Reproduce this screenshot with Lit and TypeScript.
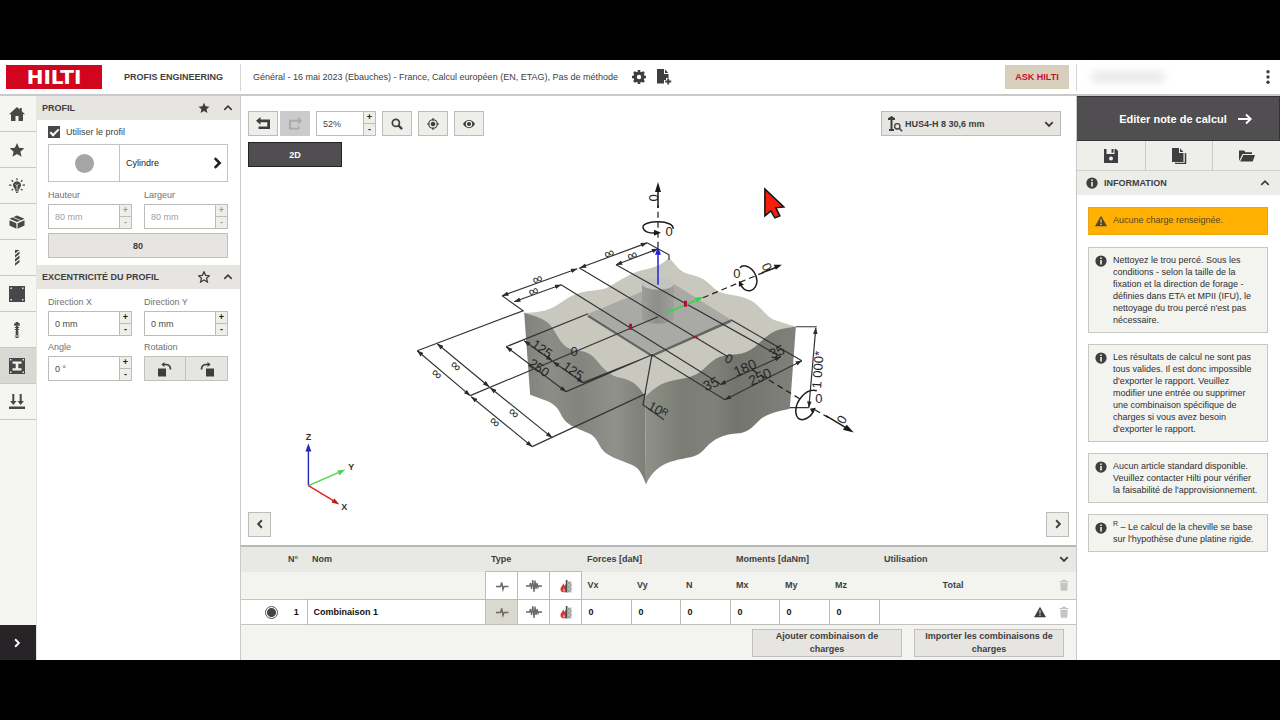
import { LitElement, html, svg, css } from "lit";
import { customElement, property } from "lit/decorators.js";
import { classMap } from "lit/directives/class-map.js";

const star = "M8 1l2.1 4.8 5.2.5-3.9 3.4 1.2 5.1L8 12.100l-4.600 2.700 1.200-5.100L.7 6.300l5.200-.5z";

const icons: Record<string, unknown> = {
  home: svg`<path d="M8 1L0 8.300h2V15h4.500v-5h3v5H14V8.300h2L12.800 5.200V2h-2v1.500z"/>`,
  star: svg`<path d=${star}/>`,
  starOutline: svg`<path d=${star} fill="none" stroke="currentColor" stroke-width="1.700"/>`,
  bulb: svg`<path d="M8 3.200a4 4 0 0 0-2.600 7.100l.6 1.400h4l.6-1.400A4 4 0 0 0 8 3.200zM6.200 12.200h3.600v1H6.200zM6.600 13.700h2.800L8.700 15H7.300z"/><path d="M8 .2v2M2.600 2.200l1.500 1.500M13.400 2.200l-1.500 1.500M0 7.200h2.500M13.500 7.200H16M2.600 12.200l1.500-1.300M13.400 12.200l-1.500-1.300" fill="none" stroke="currentColor" stroke-width="1.300"/><path d="M8 11V7.500M6.500 6.200L8 7.800l1.500-1.600" fill="none" stroke="#f5f5f1" stroke-width=".8"/>`,
  block: svg`<path d="M8 1.500l7.500 3.200L8 8 .5 4.700zM.5 6.200L7.400 9.300v5.500L.5 11.500zM15.500 6.200L8.600 9.300v5.500l6.900-3.300z"/><path d="M4 3.300l7.500 3.200" stroke="#f5f5f1" stroke-width=".8"/>`,
  drill: svg`<path d="M6 0h4.500L6 3.500zM6 5l4.500-3.500v2.600L6 7.600zM6 9.100l4.500-3.500v2.600L6 11.700zM6 13.200l4.500-3.500v2.600L6 15.800z"/>`,
  plate: svg`<path d="M0 0h16v16H0z"/><path d="M1.500 1.500h1.400v1.400H1.500zM13.100 1.500h1.400v1.400h-1.400zM1.500 13.100h1.400v1.400H1.500zM13.100 13.100h1.400v1.400h-1.400z" fill="#f5f5f1"/>`,
  anchor: svg`<path d="M6.700 0h2.600v1.300h1.500v2.500H5.200V1.300h1.500zM7 4h2v9H7z"/><path d="M5.800 5.500h4.400M5.800 7.500h4.400M6.300 10h3.400M6.300 12h3.400M5.800 14h4.400M6.500 15.500h3" stroke="currentColor" stroke-width="1"/>`,
  profile: svg`<path d="M0 0h16v16H0z"/><path d="M3.500 3.500h9v2.300H9.300v4.400h3.200v2.300h-9v-2.300h3.200V5.800H3.500zM1 1h1.400v1.400H1zM13.600 1H15v1.400h-1.400zM1 13.600h1.400V15H1zM13.600 13.600H15V15h-1.400z" fill="#f0f0ec"/>`,
  loads: svg`<path d="M0 12.500h16V15H0zM3.300 0h2v7h2.200l-3.200 4-3.200-4h2.200zM10.700 0h2v7h2.200l-3.200 4-3.200-4h2.200z"/>`,
  up: svg`<path d="M3 10.500l5-5 5 5" fill="none" stroke="currentColor" stroke-width="2.200"/>`,
  down: svg`<path d="M3 5.500l5 5 5-5" fill="none" stroke="currentColor" stroke-width="2.500"/>`,
  right: svg`<path d="M5.500 3l5 5-5 5" fill="none" stroke="currentColor" stroke-width="2.500"/>`,
  rightBold: svg`<path d="M5 1.500L11.500 8 5 14.500" fill="none" stroke="currentColor" stroke-width="3.500"/>`,
  left: svg`<path d="M10.500 3l-5 5 5 5" fill="none" stroke="currentColor" stroke-width="2.500"/>`,
  gear: svg`<circle cx="8" cy="8" r="3.900" fill="none" stroke="currentColor" stroke-width="3.400"/><path d="M8 1v3M8 12v3M1 8h3M12 8h3M3 3l2.200 2.200M10.800 10.800L13 13M3 13l2.200-2.200M10.800 5.200L13 3" stroke="currentColor" stroke-width="2.600"/>`,
  addDoc: svg`<path d="M1 0h7v5h4.500v4H10v2H8v3.500H1zM9 .3L12.300 4H9z"/><path d="M12.200 9.500v6M9.200 12.500h6" stroke="currentColor" stroke-width="1.800"/>`,
  undo: svg`<path d="M5.500 1v2.500H15V13H3.500v-2.500h8.800V6.200H5.500v2.500L1 4.800z"/>`,
  redo: svg`<path d="M11 .8v3H2v9.700h10.500v-3h-1.800v1.200H4v-6h7v3.100l4-4z"/>`,
  search: svg`<circle cx="6.500" cy="6.500" r="4.700" fill="none" stroke="currentColor" stroke-width="2.300"/><path d="M9.800 9.800l5 5" stroke="currentColor" stroke-width="3"/>`,
  target: svg`<circle cx="8" cy="8" r="5.700" fill="none" stroke="currentColor" stroke-width="1.500"/><circle cx="8" cy="8" r="3"/><path d="M8 0v3.500M8 12.500V16M0 8h3.500M12.500 8H16" stroke="currentColor" stroke-width="1.600"/>`,
  eye: svg`<path d="M0 8c2-3.700 5-5.500 8-5.500s6 1.800 8 5.500c-2 3.700-5 5.500-8 5.500S2 11.700 0 8z"/><circle cx="8" cy="8" r="3.500" fill="none" stroke="#eeeeea" stroke-width="1.500"/>`,
  anchorSearch: svg`<path d="M4.500 0L8 2.300V4H5.500v9H7v2H2v-2h1.500V4H1V2.300z"/><circle cx="10.300" cy="10.300" r="2.700" fill="none" stroke="currentColor" stroke-width="1.300"/><path d="M12.200 12.200l3 3" stroke="currentColor" stroke-width="1.600"/>`,
  save: svg`<path d="M1 1h2.500v5h8V1H13l2 2v12H1zM8.500 1h2v3.800h-2z"/><circle cx="8" cy="10.500" r="2" fill="#eeeeea"/>`,
  copy: svg`<path d="M1 0h7v5h4.500v9H1zM9 .3L12.400 4H9z"/><path d="M14.500 5v10.500H4" fill="none" stroke="currentColor" stroke-width="1.500"/>`,
  folder: svg`<path d="M0 13V2.500h5l1.500 1.700h6.500V6H3.500zM4.300 7H16l-2.300 6.500H1.200z"/>`,
  info: svg`<circle cx="8" cy="8" r="7.500"/><path d="M6.800 6.700h2.400v6H6.800zM6.800 3.200h2.400v2.200H6.800z" fill="#deded9"/>`,
  warn: svg`<path d="M8 1l8 14H0z"/><path d="M7.200 5.500h1.600l-.3 5h-1zM7.200 11.500h1.600v1.700H7.200z" fill="#e8e5da"/>`,
  trash: svg`<path d="M5.500 1h5v1.500H14V4H2V2.500h3.500zM3 5h10l-.7 10.500H3.700z"/>`,
  dots: svg`<circle cx="8" cy="2.800" r="1.700"/><circle cx="8" cy="8" r="1.700"/><circle cx="8" cy="13.200" r="1.700"/>`,
  arrow: svg`<path d="M1 8h12M9 3.500l4.700 4.500L9 12.500" fill="none" stroke="currentColor" stroke-width="1.900"/>`,
  rotL: svg`<path d="M1 7.500h8V15.500H1z"/><path d="M6.500 3.500h2c3 0 5 1.700 5 5" fill="none" stroke="currentColor" stroke-width="1.700"/><path d="M7.500 1v5l-3.200-2.500z"/>`,
  rotR: svg`<path d="M7 7.500h8V15.500H7z"/><path d="M9.500 3.500h-2c-3 0-5 1.700-5 5" fill="none" stroke="currentColor" stroke-width="1.700"/><path d="M8.500 1v5l3.200-2.500z"/>`,
  pulse: svg`<path d="M2 8.500h4.500l1.200-4 1.300 7 1-3h4.500" fill="none" stroke="currentColor" stroke-width="1.400"/>`,
  seismic: svg`<path d="M0 8h3.500l1-3 1 6 1.300-9 1.200 12L9 2.500l1 8.500 1-6 1 4.500.8-1.500H16" fill="none" stroke="currentColor" stroke-width="1.300"/>`,
  fire: svg`<path d="M5 5C5.500 7 2.500 8.500 2.500 11.500 2.500 14 4.500 14.500 8 14.300V5.500L6.600 8z" fill="#d8322a"/><path d="M6 9.500c0 2-1.600 2.200-1.300 3.500l2.500.8z" fill="#f4a09a"/><path d="M7.800 2h1.700v12.500H7.800z" fill="#4a4a4a"/><path d="M10 3.500h3.500v11H10z" fill="#b9b9b6"/><path d="M10 5h2M12 7h1.500M10 9h2M12 11h1.500M10 13h2" stroke="#888"/>`,
};

@customElement("ui-icon")
export class UiIcon extends LitElement {
  @property() name = "";
  static styles = css`
    :host { display: inline-flex; width: 16px; height: 16px; flex: none; }
    svg { width: 100%; height: 100%; fill: currentColor; }
  `;
  render() {
    return html`<svg viewBox="0 0 16 16" aria-hidden="true">${icons[this.name]}</svg>`;
  }
}

@customElement("number-field")
export class NumberField extends LitElement {
  @property() label = "";
  @property() value = "";
  @property({ type: Boolean }) disabled = false;
  @property({ type: Boolean, attribute: "hide-label" }) hideLabel = false;
  static styles = css`
    :host { display: block; min-width: 0; color: #48484b; font-size: 9px; }
    label { display: block; height: 18px; line-height: 18px; color: #707074; }
    .box { display: flex; height: 25px; box-sizing: border-box; border: 1px solid #bcbcb8; background: #fff; }
    input { flex: 1; min-width: 0; width: 0; border: 0; padding: 0 6px; background: none; font: inherit; color: inherit; outline: 0; }
    .steps { display: flex; flex-direction: column; width: 11px; border-left: 1px solid #bcbcb8; }
    button { flex: 1; min-height: 0; padding: 0; border: 0; background: #eeeeea; font: bold 9px/9px "Liberation Sans", Arial, sans-serif; color: #222; }
    button + button { border-top: 1px solid #bcbcb8; }
    .off, .off button { color: #a0a09e; }
  `;
  render() {
    return html`
      ${this.hideLabel ? null : html`<label for="field">${this.label}</label>`}
      <div class=${classMap({ box: true, off: this.disabled })}>
        <input id="field" aria-label=${this.label} .value=${this.value} ?disabled=${this.disabled} />
        <span class="steps">
          <button ?disabled=${this.disabled} aria-label="Augmenter">+</button>
          <button ?disabled=${this.disabled} aria-label="Diminuer">-</button>
        </span>
      </div>`;
  }
}

/* Double-headed dimension line between two points. */
const dim = (x1: number, y1: number, x2: number, y2: number) =>
  svg`<line x1=${x1} y1=${y1} x2=${x2} y2=${y2} marker-start="url(#tip)" marker-end="url(#tip)"/>`;
/* Dimension value centred on a point and turned along its line. */
const mark = (text: string, x: number, y: number, angle: number, size = 14) =>
  svg`<text transform="translate(${x} ${y}) rotate(${angle})" font-size=${size} text-anchor="middle" dy=".35em">${text}</text>`;

@customElement("model-view")
export class ModelView extends LitElement {
  static styles = css`
    :host { display: block; }
    svg { display: block; width: 100%; height: 100%; font-family: "Liberation Sans", Arial, sans-serif; }
    .lines { stroke: #343434; stroke-width: 1.200; fill: none; }
    .marks { fill: #262626; }
    .axis { fill: #333; font-weight: bold; }
  `;
  render() {
    return html`<svg viewBox="240 96 836 449" role="img" aria-label="Modèle 3D">
      <defs>
        <marker id="tip" viewBox="0 0 8 6" refX="7.500" refY="3" markerWidth="7" markerHeight="5" markerUnits="userSpaceOnUse" orient="auto-start-reverse"><path d="M0 .3L8 3 0 5.700z" fill="#2c2c2c"/></marker>
        <linearGradient id="left"><stop offset="0" stop-color="#80817b"/><stop offset=".2" stop-color="#8c8d86"/><stop offset=".45" stop-color="#83847e"/><stop offset=".75" stop-color="#90918b"/><stop offset="1" stop-color="#7d7e78"/></linearGradient>
        <linearGradient id="right"><stop offset="0" stop-color="#8f9087"/><stop offset=".25" stop-color="#7b7c74"/><stop offset=".45" stop-color="#80817a"/><stop offset=".6" stop-color="#73746d"/><stop offset="1" stop-color="#80817a"/></linearGradient>
        <linearGradient id="rod"><stop offset="0" stop-color="#9c9c99"/><stop offset=".5" stop-color="#8d8d8a"/><stop offset="1" stop-color="#9f9f9b"/></linearGradient>
      </defs>
      <path fill="#c8c8be" d="M524 313C535 313 542 312 550 309S568 296 580 293S600 291 607 288S628 274 640 271S660 267 669 258C675 264 678 270 685 273S700 276 707 282S716 292 726 294S748 297 757 305S768 319 780 322L796 327L720 380L646 402L560 360z"/>
      <path fill="url(#left)" d="M524 313C532 316 541 317 549 324C557 333 560 346 570 349S588 350 596 360S610 376 620 378S638 384 645 397L646 485C640 468 636 467 626 463S604 456 599 445S589 434 580 430S565 424 560 413S545 401 530 395z"/>
      <path fill="url(#right)" d="M645 397C653 390 658 385 668 382S693 379 703 370S716 356 732 355S752 350 763 340S780 329 796 327L790 409C777 412 766 414 759 421S748 433 736 434S714 439 706 448S694 457 684 459S655 464 646 485z"/>
      <path fill="#a9a9a5" d="M588 314L669 281L731 320L652 354z"/>
      <path fill="none" stroke="#656562" stroke-width="2.500" d="M588 316L652 356L731 321"/>
      <path fill="url(#rod)" d="M642 284v34a16 6 0 0 0 32 0v-34z"/>
      <ellipse cx="658" cy="284" rx="16" ry="6" fill="#c3c3bf"/>
      <g class="lines">
        ${dim(502, 296, 577, 269)}${dim(580, 268, 647, 243)}
        ${dim(514, 302, 561, 285)}${dim(616, 265, 658, 249)}
        ${dim(417, 351, 470, 396)}${dim(471, 397, 532, 447)}
        ${dim(437, 344, 489, 387)}${dim(490, 388, 552, 438)}
        ${dim(524, 341, 552, 361)}${dim(553, 362, 583, 383)}${dim(506, 347, 566, 392)}
        ${dim(720, 385, 781, 357)}${dim(725, 400, 802, 361)}${dim(816, 328, 809, 408)}
        <path d="M502 296L523 311L417 351M647 243L669 255V260M561 285L720 384M579 268L728 357M616 265L781 357M652 355L725 400M731 320L802 361M470 396L658 317M532 447L646 394M506 347L588 314M566 392L652 355M583 383L640 360M796 327H817M790 408H809M652 355L643 405L664 420"/>
        <path stroke="#1d1d1d" stroke-dasharray="6 4" d="M658 248V205M703 298L770 270M752 370L803 401M815 410L832 420"/>
        <path stroke="#1d1d1d" stroke-width="1.500" d="M673 229C675 220 643 220 643 227C643 232 650 234 657 233M740 268C744 263 755 268 757 280C758 292 744 296 740 283M817 391C806 388 795 402 796 413C797 424 809 421 814 411"/>
      </g>
      <path fill="none" stroke="#1a1a1a" stroke-width="1.500" d="M658 208V188M762 273L778 267M826 416L846 428"/>
      <path fill="#1a1a1a" d="M658 182l3 10h-6zM782 265l-6 5-2-5zM854 433l-11-3 4-5zM661 233l-7-3v6zM739 281l5 4-5 2zM816 408l-6 1 3 5z"/>
      <path stroke="#1f22d8" stroke-width="1.500" d="M658 285V253"/><path fill="#1f22d8" d="M658 247l3 8h-6z"/>
      <path stroke="#35d83b" stroke-width="1.500" d="M665 314L695 301"/><path fill="#35d83b" d="M704 297l-7 6-2-5z"/>
      <path fill="#b01030" d="M629 324h3v6h-3zM684 301h3v6h-3zM692 338l4-2 3 3z"/>
      <g class="marks">
        ${mark("∞", 537, 279, -20)}${mark("∞", 609, 253, -20)}${mark("∞", 533, 291, -20)}${mark("∞", 632, 255, -20)}
        ${mark("∞", 437, 374, 42)}${mark("∞", 456, 366, 42)}${mark("∞", 495, 422, 42)}${mark("∞", 514, 413, 42)}
        ${mark("125", 542, 349, 35, 13)}${mark("250", 539, 368, 35, 13)}${mark("125", 573, 371, 35, 13)}${mark("0", 574, 352, 0, 13)}
        ${mark("35", 711, 384, -24)}${mark("180", 745, 368, -24)}${mark("35", 777, 352, -24)}${mark("250", 760, 377, -24)}
        ${mark("0", 729, 359, 25, 13)}${mark("1 000*", 818, 370, -86, 13)}${mark("10ᴿ", 658, 410, 30, 13)}
        ${mark("0", 669, 232, 0, 13)}${mark("0", 654, 198, 90, 13)}${mark("0", 737, 274, 0, 13)}${mark("0", 767, 267, 65, 13)}
        ${mark("0", 819, 399, 0, 13)}${mark("0", 842, 420, 120, 13)}
      </g>
      <path stroke="#2429b8" stroke-width="1.400" d="M308 486V450"/><path fill="#2429b8" d="M308 444l3 8h-6z"/>
      <path stroke="#45d94a" stroke-width="1.400" d="M308 486L338 473"/><path fill="#45d94a" d="M345 470l-6 6-2-5z"/>
      <path stroke="#e02020" stroke-width="1.400" d="M308 486L333 501"/><path fill="#c01818" d="M339 505l-8-2 3-4z"/>
      <g class="axis">${mark("Z", 308, 437, 0, 9)}${mark("Y", 351, 467, 0, 9)}${mark("X", 344, 507, 0, 9)}</g>
      <path fill="#f5200c" stroke="#111" stroke-width="1.500" d="M765 189v27l6-5 4 7 5-2-4-8 8-1z"/>
    </svg>`;
  }
}

const nav = [
  ["home", "Accueil"], ["star", "Favoris"], ["bulb", "Conseils"], ["block", "Matériau support"], ["drill", "Perçage"],
  ["plate", "Platine"], ["anchor", "Cheville"], ["profile", "Profil"], ["loads", "Charges"],
];
const notes = [
  html`Nettoyez le trou percé. Sous les conditions - selon la taille de la fixation et la direction de forage - définies dans ETA et MPII (IFU), le nettoyage du trou percé n'est pas nécessaire.`,
  html`Les résultats de calcul ne sont pas tous valides. Il est donc impossible d'exporter le rapport. Veuillez modifier une entrée ou supprimer une combinaison spécifique de charges si vous avez besoin d'exporter le rapport.`,
  html`Aucun article standard disponible. Veuillez contacter Hilti pour vérifier la faisabilité de l'approvisionnement.`,
  html`<sup>R</sup> – Le calcul de la cheville se base sur l'hypothèse d'une platine rigide.`,
];
const kinds = [["pulse", "Statique"], ["seismic", "Sismique"], ["fire", "Feu"]];
const components = ["Vx", "Vy", "N", "Mx", "My", "Mz"];

@customElement("app-root")
export class AppRoot extends LitElement {
  static styles = css`
    :host { display: flex; flex-direction: column; box-sizing: border-box; height: 100vh; padding: 60px 0; background: #000; color: #3e3e41; font: 9px/12px "Liberation Sans", Arial, sans-serif; }
    * { box-sizing: border-box; }
    button, input, select { font: inherit; color: inherit; margin: 0; padding: 0; border-radius: 0; }
    h2 { margin: 0; font-size: 9px; }
    .header { display: flex; align-items: center; height: 36px; background: #fff; border-bottom: 2px solid #c9c9c9; }
    .brand { display: flex; align-items: center; width: 241px; height: 27px; padding-left: 6px; gap: 22px; border-right: 1px solid #d4d4d4; font-weight: bold; white-space: nowrap; }
    .logo { width: 96px; height: 24px; flex: none; }
    .crumb { margin: 0 13px 0 12px; white-space: nowrap; }
    .tools { display: flex; gap: 9px; flex: 1; }
    .plain { display: inline-flex; align-items: center; justify-content: center; border: 0; background: none; }
    .ask { width: 64px; height: 24px; margin-right: 7px; border: 0; background: #d7cebc; color: #c8102e; font-weight: bold; }
    .account { display: flex; align-items: center; justify-content: space-between; width: 204px; height: 27px; border-left: 1px solid #d4d4d4; padding: 0 4px 0 15px; }
    .user { width: 72px; height: 10px; background: #e6e6e6; filter: blur(4px); }
    .body { flex: 1; min-height: 0; display: grid; grid-template-columns: 36px 204px minmax(0, 1fr) 204px; background: #fff; }
    .nav { display: flex; flex-direction: column; background: #f5f5f1; }
    .nav a { display: flex; align-items: center; justify-content: center; height: 36px; padding-right: 3px; border-bottom: 1px solid #c8c8c6; color: #48484b; }
    .nav a.on { background: #d9d9d4; }
    .expand { margin-top: auto; height: 35px; padding-right: 3px; background: #262427; color: #fff; }
    .side { border-left: 1px solid #e4e4e0; }
    .title { display: flex; align-items: center; gap: 12px; height: 24px; padding: 0 6px 0 5px; background: #e6e5e2; white-space: nowrap; }
    .title h2 { flex: 1; }
    .small { width: 12px; height: 12px; }
    .form { display: grid; grid-template-columns: 84px 84px; column-gap: 12px; padding: 6px 11px 0; }
    .wide { grid-column: 1 / 3; }
    .use { display: flex; align-items: center; gap: 6px; height: 12px; }
    .use input { appearance: none; width: 12px; height: 12px; background: #48484b; display: grid; place-items: center; }
    .use input:checked::before { content: ""; width: 7px; height: 3px; border: solid #fff; border-width: 0 0 2px 2px; rotate: -45deg; translate: 0 -1px; }
    .shape { display: flex; align-items: center; height: 38px; margin: 6px 0 4px; padding: 0 4px 0 0; border: 1px solid #c3c3c0; background: #fff; color: #222; text-align: left; }
    .swatch { display: grid; place-items: center; align-self: stretch; width: 71px; border-right: 1px solid #c3c3c0; margin-right: 6px; }
    .swatch i { width: 19px; height: 19px; border-radius: 50%; background: #a5a5a5; }
    .shape span.name { flex: 1; }
    .gray { border: 1px solid #c0c0bd; background: #e6e5e2; }
    .auto { height: 25px; margin: 4px 0 7px; font-weight: bold; }
    .second { padding-top: 4px; row-gap: 2px; }
    .rotation { display: grid; grid-template-columns: 1fr 1fr; }
    .caption { grid-column: 1 / 3; height: 18px; line-height: 18px; color: #707074; }
    .rotation button { height: 25px; display: grid; place-items: center; }
    .rotation button + button { border-left: 0; }
    .main { display: flex; flex-direction: column; min-width: 0; }
    .viewer { position: relative; flex: 1; min-height: 0; display: flex; flex-direction: column; padding: 15px 7px 8px 7px; border-left: 1px solid #c9c9c9; }
    .canvas { position: absolute; inset: 0 0 0 -1px; }
    .bar { position: relative; display: flex; align-items: center; gap: 6px; padding-right: 8px; }
    .pair { display: flex; gap: 2px; }
    .tool { display: grid; place-items: center; width: 30px; height: 25px; background: #eeeeea; border: 1px solid #bcbcb8; }
    .tool[disabled] { background: #cbcbcb; border-color: #cbcbcb; color: #aaa; }
    .zoom { width: 60px; }
    .picker { position: relative; margin-left: auto; width: 180px; height: 25px; }
    .picker select { appearance: none; width: 100%; height: 25px; padding-left: 23px; border: 1px solid #bcbcb8; background: #e6e5e2; font-weight: bold; }
    .picker ui-icon { position: absolute; top: 5px; left: 6px; pointer-events: none; }
    .picker ui-icon.open { left: auto; right: 6px; top: 7px; width: 12px; height: 12px; }
    .flat { position: relative; width: 94px; height: 25px; margin-top: 6px; border: 1px solid #222; background: #504e50; color: #fff; font-weight: bold; }
    .pager { position: relative; display: flex; justify-content: space-between; margin-top: auto; }
    .pager .tool { width: 23px; }
    .loads { border-top: 2px solid #b8b8b8; border-left: 1px solid #c9c9c9; background: #f3f3ef; }
    table { width: 100%; border-collapse: collapse; table-layout: fixed; }
    th { padding: 0 0 0 5px; text-align: left; }
    .group { height: 25px; background: #e8e8e4; }
    .sub { height: 28px; }
    .row { height: 25px; background: #fff; border: solid #c3c3c0; border-width: 1px 0; color: #111; }
    td { padding: 0; height: 24px; font-weight: bold; }
    td.cell, td.kind, th.kind { border: 1px solid #bcbcb8; }
    th.kind { padding: 0; background: #fff; }
    .kind button { width: 100%; height: 23px; color: #6a6a6a; }
    td.kind.on { background: #d9d9d0; }
    .cell input { width: 100%; height: 22px; padding: 0 6px; border: 0; background: none; }
    th.n { padding-left: 2px; }
    .index { text-align: center; }
    .pick { text-align: right; }
    .pick input { appearance: none; width: 13px; height: 13px; margin-right: 8px; vertical-align: middle; border: 1px solid #555; border-radius: 50%; background: radial-gradient(circle, #444 0 4px, #fff 5px); }
    .end { display: flex; align-items: center; justify-content: flex-end; gap: 12px; padding-right: 6px; color: #3e3e41; }
    .use-title { flex: 1; }
    .end .total { flex: 1; padding-right: 24px; text-align: center; }
    .end .pale { color: #c4c4c0; }
    .actions { display: flex; justify-content: flex-end; gap: 12px; padding: 4px 12px 3px; }
    .actions button { width: 150px; height: 28px; padding: 0 10px; font-weight: bold; line-height: 13px; }
    .report { display: flex; align-items: center; justify-content: center; gap: 10px; width: 100%; height: 45px; padding-left: 16px; border: 1px solid #333; border-left: 0; background: #504e50; color: #fff; font-size: 11px; font-weight: bold; }
    .panel { border-left: 1px solid #c9c9c9; }
    .files { display: grid; grid-template-columns: repeat(3, 1fr); height: 30px; background: #eeeeea; border-bottom: 1px solid #d0d0cc; }
    .files button + button { border-left: 1px solid #c9c9c6; }
    .info { gap: 6px; padding: 0 9px; background: #ecece8; }
    .notes { display: flex; flex-direction: column; gap: 11px; padding: 12px 12px 0 11px; }
    .note { display: flex; gap: 6px; padding: 6px 8px 6px 6px; border: 1px solid #c6c6c2; background: #f3f3f0; color: #2e2e30; }
    .note p { margin: 0; }
    .note ui-icon { margin-top: 1px; color: #3e3e41; }
    .note.alert { height: 28px; background: #ffb000; border-color: #eba612; color: #564622; margin-bottom: 1px; }
    .note.alert ui-icon { color: #564622; }
    sup { font-size: 7px; line-height: 0; }
  `;

  private section(title: string, icon: string) {
    return html`<div class="title"><h2>${title}</h2>
      <button class="plain" aria-label="Favori"><ui-icon class="small" name=${icon}></ui-icon></button>
      <button class="plain" aria-label="Replier"><ui-icon class="small" name="up"></ui-icon></button></div>`;
  }

  render() {
    return html`
      <header class="header">
        <div class="brand">
          <svg class="logo" viewBox="0 0 96 24" role="img" aria-label="Hilti"><path fill="#d2051e" d="M0 0h96v24H0z"/><text x="48" y="19" text-anchor="middle" font-family="DejaVu Sans" font-weight="bold" font-size="20" fill="#fff">HILTI</text></svg>
          <span>PROFIS ENGINEERING</span>
        </div>
        <span class="crumb">Général - 16 mai 2023 (Ebauches) - France, Calcul européen (EN, ETAG), Pas de méthode</span>
        <div class="tools">
          <button class="plain" aria-label="Paramètres"><ui-icon name="gear"></ui-icon></button>
          <button class="plain" aria-label="Nouveau"><ui-icon name="addDoc"></ui-icon></button>
        </div>
        <button class="ask">ASK HILTI</button>
        <div class="account"><span class="user"></span><button class="plain" aria-label="Menu"><ui-icon name="dots"></ui-icon></button></div>
      </header>
      <div class="body">
        <nav class="nav">
          ${nav.map(([icon, label]) => html`<a href="#" class=${classMap({ on: icon === "profile" })} aria-label=${label}><ui-icon name=${icon}></ui-icon></a>`)}
          <button class="plain expand" aria-label="Déplier"><ui-icon class="small" name="right"></ui-icon></button>
        </nav>
        <aside class="side">
          ${this.section("PROFIL", "star")}
          <div class="form">
            <label class="use wide"><input type="checkbox" checked />Utiliser le profil</label>
            <button class="shape wide"><span class="swatch"><i></i></span><span class="name">Cylindre</span><ui-icon class="small" name="rightBold"></ui-icon></button>
            <number-field label="Hauteur" value="80 mm" disabled></number-field>
            <number-field label="Largeur" value="80 mm" disabled></number-field>
            <button class="gray auto wide">80</button>
          </div>
          ${this.section("EXCENTRICITÉ DU PROFIL", "starOutline")}
          <div class="form second">
            <number-field label="Direction X" value="0 mm"></number-field>
            <number-field label="Direction Y" value="0 mm"></number-field>
            <number-field label="Angle" value="0 °"></number-field>
            <div class="rotation"><span class="caption">Rotation</span>
              <button class="gray" aria-label="Rotation à gauche"><ui-icon name="rotL"></ui-icon></button>
              <button class="gray" aria-label="Rotation à droite"><ui-icon name="rotR"></ui-icon></button>
            </div>
          </div>
        </aside>
        <main class="main">
          <div class="viewer">
            <model-view class="canvas"></model-view>
            <div class="bar">
              <div class="pair">
                <button class="tool" aria-label="Annuler"><ui-icon name="undo"></ui-icon></button>
                <button class="tool" disabled aria-label="Rétablir"><ui-icon name="redo"></ui-icon></button>
              </div>
              <number-field class="zoom" label="Zoom" value="52%" hide-label></number-field>
              <button class="tool" aria-label="Ajuster"><ui-icon class="small" name="search"></ui-icon></button>
              <button class="tool" aria-label="Centrer"><ui-icon class="small" name="target"></ui-icon></button>
              <button class="tool" aria-label="Affichage"><ui-icon class="small" name="eye"></ui-icon></button>
              <div class="picker"><select aria-label="Cheville"><option>HUS4-H 8 30,6 mm</option></select><ui-icon name="anchorSearch"></ui-icon><ui-icon class="open" name="down"></ui-icon></div>
            </div>
            <button class="flat">2D</button>
            <div class="pager">
              <button class="tool" aria-label="Précédent"><ui-icon class="small" name="left"></ui-icon></button>
              <button class="tool" aria-label="Suivant"><ui-icon class="small" name="right"></ui-icon></button>
            </div>
          </div>
          <section class="loads">
            <table>
              <colgroup><col style="width:45px" /><col style="width:21px" /><col />
                ${kinds.map(() => html`<col style="width:32px" />`)}
                ${components.map((_, i) => html`<col style="width:${i % 2 ? 49 : 50}px" />`)}
                <col style="width:197px" /></colgroup>
              <thead>
                <tr class="group"><th></th><th class="n">N°</th><th>Nom</th><th colspan="3">Type</th><th colspan="3">Forces [daN]</th><th colspan="3">Moments [daNm]</th>
                  <th><div class="end"><span class="use-title">Utilisation</span><ui-icon class="small" name="down"></ui-icon></div></th></tr>
                <tr class="sub"><td></td><td></td><td></td>
                  ${kinds.map(([icon, label]) => html`<th class="kind"><button class="plain" aria-label=${label}><ui-icon name=${icon}></ui-icon></button></th>`)}
                  ${components.map((c) => html`<th>${c}</th>`)}
                  <th><div class="end"><span class="total">Total</span><ui-icon class="small pale" name="trash"></ui-icon></div></th></tr>
              </thead>
              <tbody>
                <tr class="row"><td class="pick"><input type="radio" name="combo" checked aria-label="Combinaison 1" /></td><td class="index">1</td>
                  <td class="cell"><input value="Combinaison 1" aria-label="Nom" /></td>
                  ${kinds.map(([icon, label]) => html`<td class=${classMap({ kind: true, on: icon === "pulse" })}><button class="plain" aria-label=${label}><ui-icon name=${icon}></ui-icon></button></td>`)}
                  ${components.map((c) => html`<td class="cell"><input value="0" aria-label=${c} /></td>`)}
                  <td><div class="end"><ui-icon class="small" name="warn"></ui-icon><ui-icon class="small pale" name="trash"></ui-icon></div></td></tr>
              </tbody>
            </table>
            <div class="actions"><button class="gray">Ajouter combinaison de charges</button><button class="gray">Importer les combinaisons de charges</button></div>
          </section>
        </main>
        <aside class="panel">
          <button class="report">Editer note de calcul<ui-icon name="arrow"></ui-icon></button>
          <div class="files">
            <button class="plain" aria-label="Enregistrer"><ui-icon name="save"></ui-icon></button>
            <button class="plain" aria-label="Copier"><ui-icon name="copy"></ui-icon></button>
            <button class="plain" aria-label="Ouvrir"><ui-icon name="folder"></ui-icon></button>
          </div>
          <div class="title info"><ui-icon class="small" name="info"></ui-icon><h2>INFORMATION</h2><button class="plain" aria-label="Replier"><ui-icon class="small" name="up"></ui-icon></button></div>
          <div class="notes">
            <div class="note alert"><ui-icon class="small" name="warn"></ui-icon><p>Aucune charge renseignée.</p></div>
            ${notes.map((n) => html`<div class="note"><ui-icon class="small" name="info"></ui-icon><p>${n}</p></div>`)}
          </div>
        </aside>
      </div>`;
  }
}
